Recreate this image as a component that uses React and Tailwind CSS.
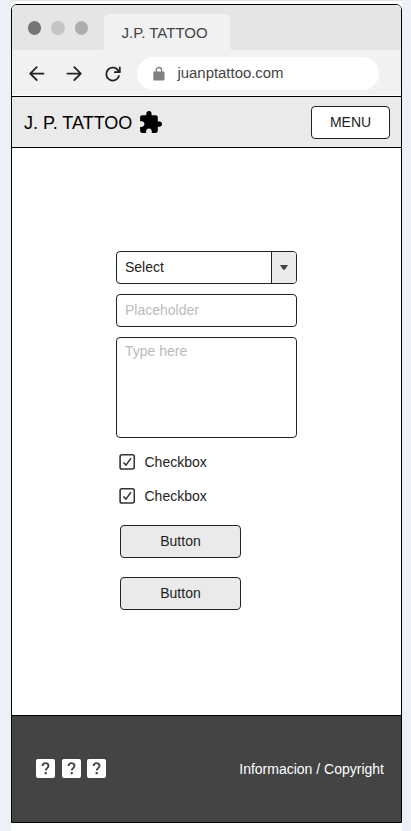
import { MdExtension } from "react-icons/md";

function NavIcon({ d, className = "" }) {
  return (
    <svg viewBox="0 0 18 18" className={`h-[18px] w-[18px] shrink-0 ${className}`} fill="none" stroke="#222" strokeWidth="1.8" strokeLinecap="round" strokeLinejoin="round">
      <path d={d} />
    </svg>
  );
}

function LockIcon() {
  return (
    <svg viewBox="0 0 12 16" className="h-4 w-3 shrink-0" fill="none">
      <path d="M3.2 7V4.2a2.7 2.7 0 0 1 5.4 0V7" stroke="#808080" strokeWidth="1.3" />
      <rect x=".3" y="5.6" width="11.2" height="9" rx="1" fill="#808080" />
    </svg>
  );
}

function BrowserChrome() {
  return (
    <div className="h-[91px] shrink-0 bg-[#f1f1f1]">
      <div className="flex h-[45px] bg-[#f1f1f1]">
        <div className="flex w-[92px] items-center gap-[10px] rounded-br-[3px] bg-[#e5e5e5] pt-px pl-[15.5px]">
          <span className="h-[13.5px] w-[13.5px] rounded-full bg-[#757575]" />
          <span className="h-[13.5px] w-[13.5px] rounded-full bg-[#c4c4c4]" />
          <span className="h-[13.5px] w-[13.5px] rounded-full bg-[#adadad]" />
        </div>
        <div className="w-[126px] bg-[#e5e5e5] pt-[9px]">
          <div className="flex h-9 items-center rounded-t-[5px] bg-[#f1f1f1] pl-[17.5px] text-[15px] text-[#444]">
            <span className="pt-[2px]">J.P. TATTOO</span>
          </div>
        </div>
        <div className="flex-1 rounded-bl-[3px] bg-[#e5e5e5]" />
      </div>
      <div className="flex h-[46px] items-center border-b border-white pt-[2px] pl-4">
        <NavIcon d="M15.6 8.6H2.4M8.7 2.2L2.2 8.6l6.5 6.4" />
        <NavIcon className="ml-[18.5px]" d="M2.4 8.6h13.2M9.3 2.2L15.8 8.6l-6.5 6.4" />
        <NavIcon className="ml-[21.5px]" d="M14.6 6.2A6.5 6.5 0 1 0 15 11M15.8 2.4v4.8h-5" />
        <div className="ml-[15px] flex h-[33px] w-[242px] items-center rounded-full bg-white pl-[16px] text-[#444]">
          <LockIcon />
          <span className="ml-[12.5px] text-[14.9px]">juanptattoo.com</span>
        </div>
      </div>
    </div>
  );
}

function Checkbox() {
  return (
    <label className="flex h-4 items-center gap-[9.5px] text-sm text-[#222]">
      <svg viewBox="0 0 16 16" className="h-4 w-4" fill="none" stroke="#333">
        <rect x="1.1" y=".8" width="14.2" height="14.2" rx="1.8" strokeWidth="1.6" />
        <path d="M4.4 8.5l2.6 2.6 5-7" strokeWidth="1.6" />
      </svg>
      Checkbox
    </label>
  );
}

function Button() {
  return (
    <button className="h-[33px] w-[121px] rounded-[4px] border border-[#222] bg-[#eaeaea] pb-[2px] text-sm text-[#222]">
      Button
    </button>
  );
}

function HelpIcon() {
  return (
    <svg viewBox="0 0 19 19" className="h-[19px] w-[19px]" fill="none">
      <rect width="19" height="19" rx="2" fill="#fff" />
      <path d="M6.6 7.1C6.6 5.2 7.8 4.1 9.5 4.1s3 1 3 2.7c0 2.2-2.8 2.4-2.8 4.8" stroke="#444" strokeWidth="1.9" />
      <rect x="8.6" y="13.1" width="2.2" height="2.2" rx=".6" fill="#444" />
    </svg>
  );
}

export default function App() {
  return (
    <div className="flex h-[831px] w-[411px] justify-start overflow-hidden bg-[#edf0f6] pl-[11px] font-['Liberation_Sans',Arial,sans-serif]">
      <div className="h-full w-[391px] border-t border-[#e2e4e8] bg-white pt-[3px]">
        <div className="flex h-[819px] flex-col overflow-hidden rounded-t-[6px] border border-black bg-white">
          <BrowserChrome />
          <header className="flex h-[52px] shrink-0 items-center border-y border-black bg-[#eaeaea] pr-[11px] pl-[12px] text-black">
            <span className="pt-[2px] text-[18px]">J. P. TATTOO</span>
            <MdExtension className="ml-[6px] h-[25px] w-[25px]" />
            <button className="ml-auto h-[33px] w-[79px] rounded-[4px] border border-[#222] bg-white text-sm text-[#222]">MENU</button>
          </header>
          <main className="flex-1 pt-[103px] pl-[104px] text-sm">
            <div className="flex h-[33px] w-[181px] overflow-hidden rounded-[4px] border border-[#222] text-[#222]">
              <span className="flex flex-1 items-center pb-[2px] pl-2">Select</span>
              <span className="flex w-[25px] items-center justify-center border-l border-[#222] bg-[#eaeaea]">
                <svg viewBox="0 0 8 5" className="h-[5px] w-2" fill="#444"><path d="M0 0h8L5 4.4q-1 .8-2 0z" /></svg>
              </span>
            </div>
            <div className="mt-[10px] flex h-[33px] w-[181px] items-center rounded-[4px] border border-[#222] pb-[2px] pl-2 text-[#bbb]">Placeholder</div>
            <div className="mt-[10px] h-[101px] w-[181px] rounded-[4px] border border-[#222] pt-[3px] pl-2 text-[#bbb]">Type here</div>
            <div className="mt-4 flex flex-col gap-[18px] pl-[3px]">
              <Checkbox />
              <Checkbox />
            </div>
            <div className="mt-[21px] flex flex-col gap-[19px] pl-1">
              <Button />
              <Button />
            </div>
          </main>
          <footer className="flex h-[107px] shrink-0 items-center justify-between border-t border-black bg-[#444] pr-[17px] pl-6 text-sm text-white">
            <div className="flex gap-[6.5px] pb-px">
              <HelpIcon />
              <HelpIcon />
              <HelpIcon />
            </div>
            <span>Informacion / Copyright</span>
          </footer>
        </div>
      </div>
    </div>
  );
}
